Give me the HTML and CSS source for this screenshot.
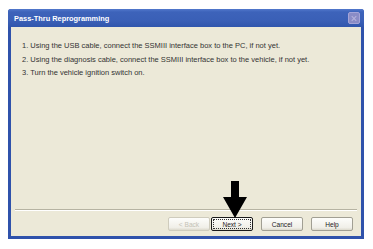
FILE: index.html
```html
<!DOCTYPE html>
<html>
<head>
<meta charset="utf-8">
<link rel="stylesheet" href="styles.css">
</head>
<body>
<div class="window">
  <div class="titlebar">
    <span class="title">Pass-Thru Reprogramming</span>
    <span class="close"><svg width="11" height="11" viewBox="0 0 11 11"><path d="M3 3 L8 8 M8 3 L3 8" stroke="#b4b2dc" stroke-width="1.2"/></svg></span>
  </div>
  <div class="client">
    <ol class="steps">
      <li>1. Using the USB cable, connect the SSMIII interface box to the PC, if not yet.</li>
      <li>2. Using the diagnosis cable, connect the SSMIII interface box to the vehicle, if not yet.</li>
      <li>3. Turn the vehicle ignition switch on.</li>
    </ol>
    <div class="sep"></div>
    <div class="buttons">
      <div class="pair">
        <button class="btn disabled">&lt; Back</button>
        <button class="btn default"><span class="focus">Next &gt;</span></button>
      </div>
      <button class="btn">Cancel</button>
      <button class="btn">Help</button>
    </div>
    <svg class="arrow" width="26" height="37" viewBox="0 0 26 37"><path d="M9 0 H17 V16 H25 L13 37 L1 16 H9 Z" fill="#000"/></svg>
  </div>
</div>
</body>
</html>
```
FILE: styles.css
```css
html, body {
  margin: 0;
  padding: 0;
  background: #fff;
}
body {
  font-family: "Liberation Sans", Arial, sans-serif;
}
.window {
  margin: 9px 0 0 8px;
  width: 356px;
  height: 230px;
  box-sizing: border-box;
  border: 3px solid #2f52ab;
  border-top: none;
  border-radius: 3px 3px 0 0;
  background: #ece9d8;
  display: flex;
  flex-direction: column;
}
.titlebar {
  height: 18px;
  margin: 0 -3px;
  border-radius: 3px 3px 0 0;
  background: linear-gradient(#5278cc 0, #3d63ba 3px, #3a5fb6 12px, #3056ad 18px);
  display: flex;
  align-items: center;
  justify-content: space-between;
  padding: 0 3px 0 6px;
  flex: none;
}
.title {
  color: #fff;
  font-weight: bold;
  font-size: 7.4px;
}
.close {
  width: 12px;
  height: 12px;
  box-sizing: border-box;
  background: #8a8cc6;
  border: 1px solid #a4a4d8;
  border-radius: 2px;
  display: flex;
  align-items: center;
  justify-content: center;
  margin-right: 1px;
}
.close svg { display: block; }
.client {
  position: relative;
  flex: 1;
  display: flex;
  flex-direction: column;
}
.steps {
  list-style: none;
  margin: 0;
  padding: 15px 0 0 11px;
  color: #333;
  font-size: 7.5px;
  display: flex;
  flex-direction: column;
  gap: 5px;
  flex: 1;
}
.steps li {
  line-height: 8.5px;
}
.sep {
  height: 0;
  margin: 0 4px 0 4px;
  border-top: 1px solid #b6b3a2;
  border-bottom: 1px solid #fff;
}
.buttons {
  display: flex;
  justify-content: flex-end;
  align-items: center;
  gap: 8px;
  padding: 6px 8px 5px 0;
}
.pair {
  display: flex;
  gap: 1px;
}
.btn {
  width: 42px;
  height: 14px;
  box-sizing: border-box;
  padding: 0;
  font-family: "Liberation Sans", Arial, sans-serif;
  font-size: 6.6px;
  color: #222;
  background: linear-gradient(#fdfdfb, #f0efe8 80%, #dcd9cc);
  border: 1px solid #a19f93;
  border-radius: 2px;
  display: flex;
  align-items: center;
  justify-content: center;
}
.btn.disabled {
  color: #c4c2b6;
  border-color: #cfccbd;
}
.btn.default {
  border: 1px solid #1a1a1a;
}
.focus {
  display: flex;
  align-items: center;
  justify-content: center;
  width: 36px;
  height: 8px;
  border: 1px dotted #333;
}
.arrow {
  position: absolute;
  left: 211px;
  top: 154px;
}
```
